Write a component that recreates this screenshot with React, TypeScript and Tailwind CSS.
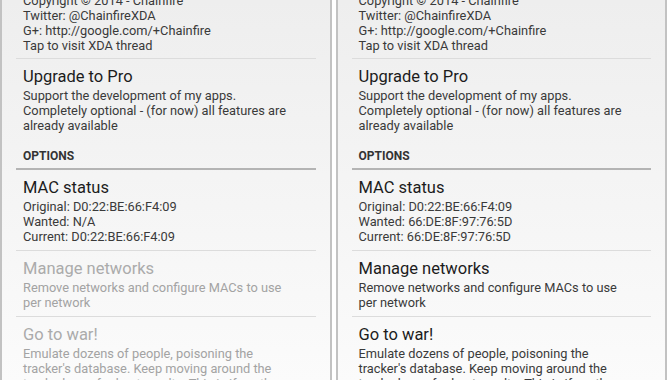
import React from "react";

interface PrefProps {
  title: string;
  lines: string[];
  disabled?: boolean;
}

interface PanelProps {
  wanted: string;
  current: string;
  disabled: boolean;
}

const Pref = ({ title, lines, disabled }: PrefProps) => {
  return (
    <div className="pt-[6px] pb-[6px] pl-[21px] pr-[6px]">
      <div
        className={
          disabled
            ? "text-[16.5px] leading-[23px] text-[#ababab]"
            : "text-[16.5px] leading-[23px] text-[#1c1c1c]"
        }
      >
        {title}
      </div>
      {lines.map((line, i) => (
        <div
          key={i}
          className={
            disabled
              ? "text-[12.8px] leading-[15px] whitespace-nowrap text-[#a3a3a3]"
              : "text-[12.8px] leading-[15px] whitespace-nowrap text-[#3a3a3a]"
          }
        >
          {line}
        </div>
      ))}
    </div>
  );
};

const Divider = () => <div className="mx-[14px] h-px bg-[#dcdcdc]" />;

const Panel = ({ wanted, current, disabled }: PanelProps) => {
  return (
    <div className="flex-1 h-full overflow-hidden border-x-2 border-[#c2c2c2] bg-linear-to-b from-[#eeeeee] to-[#fbfbfb]">
      {/* about section, scrolled so the first line is cut */}
      <div className="mt-[-7px] pb-[5px] pl-[21px]">
        {[
          "Copyright © 2014 - Chainfire",
          "Twitter: @ChainfireXDA",
          "G+: http://google.com/+Chainfire",
          "Tap to visit XDA thread",
        ].map((t) => (
          <div key={t} className="text-[12.8px] leading-[15px] text-[#3a3a3a]">
            {t}
          </div>
        ))}
      </div>
      <Divider />
      <Pref
        title="Upgrade to Pro"
        lines={[
          "Support the development of my apps.",
          "Completely optional - (for now) all features are",
          "already available",
        ]}
      />

      <div className="mt-[9px] pb-[4px] pl-[21px] text-[12px] leading-[16px] font-bold text-[#333333]">
        OPTIONS
      </div>
      <div className="mx-[14px] h-[2px] bg-[#b4b4b4]" />

      <Pref
        title="MAC status"
        lines={[
          "Original: D0:22:BE:66:F4:09",
          "Wanted: " + wanted,
          "Current: " + current,
        ]}
      />
      <Divider />
      <Pref
        title="Manage networks"
        lines={["Remove networks and configure MACs to use", "per network"]}
        disabled={disabled}
      />
      <Divider />
      <Pref
        title="Go to war!"
        lines={[
          "Emulate dozens of people, poisoning the",
          "tracker's database. Keep moving around the",
          "tracked area for best results. This is if, on the",
        ]}
        disabled={disabled}
      />
    </div>
  );
};

const App = () => {
  return (
    <div
      className="w-[667px] h-[380px] flex gap-[4px] bg-white overflow-hidden"
      style={{ fontFamily: "Roboto, 'Noto Sans', sans-serif" }}
    >
      <Panel wanted="N/A" current="D0:22:BE:66:F4:09" disabled={true} />
      <Panel
        wanted="66:DE:8F:97:76:5D"
        current="66:DE:8F:97:76:5D"
        disabled={false}
      />
    </div>
  );
};

export default App;
